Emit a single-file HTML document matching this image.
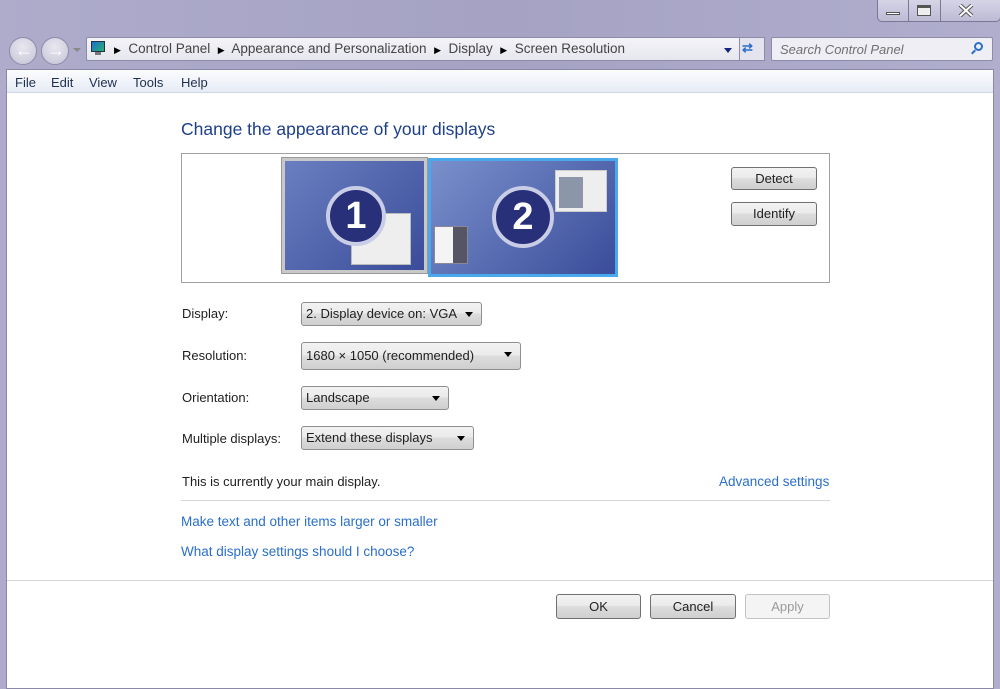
<!DOCTYPE html>
<html><head><style>
*{margin:0;padding:0;box-sizing:border-box}
body{width:1000px;height:681px;overflow:hidden;background:linear-gradient(90deg,#aeabcb,#a5a2c4 50%,#b0adcd);font-family:"Liberation Sans",sans-serif;font-size:13px;color:#1e1e1e;position:relative}
.a{position:absolute}
.btn{position:absolute;border:1px solid #707070;border-radius:3px;background:linear-gradient(#f2f2f2,#ebebeb 45%,#dddddd 50%,#cfcfcf);text-align:center;font-size:13px;color:#222}
.dd{position:absolute;border:1px solid #8e8f8f;border-radius:3px;background:linear-gradient(#f2f2f2,#ebebeb 45%,#dddddd 50%,#cfcfcf);font-size:13px;padding-left:4px;line-height:22px;color:#1e1e1e}
.dd:after{content:"";position:absolute;right:8px;top:9px;border-left:4px solid transparent;border-right:4px solid transparent;border-top:5px solid #000}
.lbl{position:absolute;left:182px;font-size:13px}
.lnk{position:absolute;color:#2a6fc9;font-size:13px}
</style></head><body>
<div class="a" style="left:877px;top:0;width:124px;height:22px;border:1px solid #7a7894;border-top:none;border-radius:0 0 5px 5px;background:linear-gradient(#d6d4e6,#bdbbd5)"></div>
<div class="a" style="left:908px;top:0;width:1px;height:21px;background:#7a7894"></div>
<div class="a" style="left:940px;top:0;width:1px;height:21px;background:#7a7894"></div>
<div class="a" style="left:886px;top:12px;width:14px;height:3px;background:#fff;border:1px solid #555"></div>
<div class="a" style="left:917px;top:5px;width:14px;height:11px;border:1px solid #555;border-top-width:3px;background:#eee"></div>
<svg class="a" style="left:958px;top:4px" width="16" height="13"><path d="M2 1L14 12M14 1L2 12" stroke="#555" stroke-width="4"/><path d="M2 1L14 12M14 1L2 12" stroke="#fff" stroke-width="2"/></svg>
<div class="a" style="left:9px;top:37px;width:28px;height:28px;border-radius:50%;border:1px solid #8d8ba7;background:radial-gradient(circle at 50% 35%,#e8e7f0,#c5c3d6)"></div>
<div class="a" style="left:41px;top:37px;width:28px;height:28px;border-radius:50%;border:1px solid #8d8ba7;background:radial-gradient(circle at 50% 35%,#e8e7f0,#c5c3d6)"></div>
<div class="a" style="left:15px;top:40px;color:#fff;font-size:18px;font-weight:bold">&#8592;</div>
<div class="a" style="left:47px;top:40px;color:#fff;font-size:18px;font-weight:bold">&#8594;</div>
<div class="a" style="left:73px;top:48px;border-left:4px solid transparent;border-right:4px solid transparent;border-top:4px solid #888"></div>
<div class="a" style="left:86px;top:37px;width:679px;height:24px;border:1px solid #8d8ba7;background:linear-gradient(#f4f4f8,#e6e6ee);border-radius:2px"></div>
<div class="a" style="left:739px;top:37px;width:26px;height:24px;border:1px solid #8d8ba7;background:#e4e4ee"></div>
<div class="a" style="left:742px;top:40px;color:#2a6fc9;font-size:13px;font-weight:bold">&#8644;</div>
<div class="a" style="left:91px;top:41px;width:14px;height:11px;background:linear-gradient(135deg,#1b6fd1,#2ab06d);border:1px solid #234"></div>
<div class="a" style="left:95px;top:52px;width:6px;height:3px;background:#777"></div>
<div class="a" style="left:114px;top:41px;font-size:13.5px;color:#444;white-space:nowrap">
<span style="font-size:9px;color:#000">&#9654;</span>&nbsp; Control Panel &nbsp;<span style="font-size:9px;color:#000">&#9654;</span>&nbsp; Appearance and Personalization &nbsp;<span style="font-size:9px;color:#000">&#9654;</span>&nbsp; Display &nbsp;<span style="font-size:9px;color:#000">&#9654;</span>&nbsp; Screen Resolution</div>
<div class="a" style="left:724px;top:48px;border-left:4px solid transparent;border-right:4px solid transparent;border-top:5px solid #1a237e"></div>
<div class="a" style="left:771px;top:37px;width:222px;height:24px;border:1px solid #8d8ba7;background:#eeeef4;border-radius:2px"></div>
<div class="a" style="left:780px;top:42px;font-style:italic;color:#707070;font-size:13px">Search Control Panel</div>
<div class="a" style="left:974px;top:42px;width:9px;height:9px;border:2px solid #2a6fc9;border-radius:50%"></div>
<div class="a" style="left:971px;top:51px;width:5px;height:2px;background:#2a6fc9;transform:rotate(-45deg)"></div>
<div class="a" style="left:6px;top:69px;width:988px;height:620px;background:#fff;border:1px solid #8a88a6"></div>
<div class="a" style="left:7px;top:70px;width:986px;height:23px;background:linear-gradient(#fbfcfe,#e6ebf5);border-bottom:1px solid #cfd6e4"></div>
<div class="a" style="left:15px;top:75px;color:#1e3050">File</div>
<div class="a" style="left:51px;top:75px;color:#1e3050">Edit</div>
<div class="a" style="left:89px;top:75px;color:#1e3050">View</div>
<div class="a" style="left:133px;top:75px;color:#1e3050">Tools</div>
<div class="a" style="left:181px;top:75px;color:#1e3050">Help</div>
<div class="a" style="left:181px;top:119px;font-size:17.5px;color:#1e3f8a">Change the appearance of your displays</div>
<div class="a" style="left:181px;top:153px;width:649px;height:130px;border:1px solid #a0a0a0"></div>
<div class="a" style="left:282px;top:158px;width:145px;height:115px;border:3px solid #c8c8c8;background:linear-gradient(135deg,#6a7fc0,#3a4c9a);box-shadow:0 0 0 1px #999"></div>
<div class="a" style="left:351px;top:213px;width:60px;height:52px;background:#eee;border:1px solid #bbb"></div>
<div class="a" style="left:326px;top:186px;width:60px;height:60px;border-radius:50%;border:4px solid #c9cde6;background:#28307a;color:#fff;font-size:38px;font-weight:bold;text-align:center;line-height:52px">1</div>
<div class="a" style="left:428px;top:158px;width:190px;height:119px;border:3px solid #4aa9ea;background:linear-gradient(135deg,#7a90cc,#3a4c9a)"></div>
<div class="a" style="left:555px;top:170px;width:52px;height:42px;background:#eee;border:1px solid #ccc"></div>
<div class="a" style="left:559px;top:177px;width:24px;height:31px;background:#8b97a8"></div>
<div class="a" style="left:434px;top:226px;width:34px;height:38px;background:#556;border:1px solid #889"></div>
<div class="a" style="left:435px;top:227px;width:18px;height:36px;background:#f4f4f4"></div>
<div class="a" style="left:492px;top:186px;width:62px;height:62px;border-radius:50%;border:4px solid #c9cde6;background:#28307a;color:#fff;font-size:38px;font-weight:bold;text-align:center;line-height:54px">2</div>
<div class="btn" style="left:731px;top:167px;width:86px;height:23px;line-height:21px">Detect</div>
<div class="btn" style="left:731px;top:202px;width:86px;height:24px;line-height:22px">Identify</div>
<div class="lbl" style="top:306px">Display:</div>
<div class="dd" style="left:301px;top:302px;width:181px;height:24px">2. Display device on: VGA</div>
<div class="lbl" style="top:348px">Resolution:</div>
<div class="dd" style="left:301px;top:342px;width:220px;height:28px;line-height:26px">1680 × 1050 (recommended)</div>
<div class="lbl" style="top:390px">Orientation:</div>
<div class="dd" style="left:301px;top:386px;width:148px;height:24px">Landscape</div>
<div class="lbl" style="top:431px">Multiple displays:</div>
<div class="dd" style="left:301px;top:426px;width:173px;height:24px">Extend these displays</div>
<div class="lbl" style="top:474px">This is currently your main display.</div>
<div class="lnk" style="left:719px;top:474px;font-size:13.5px">Advanced settings</div>
<div class="a" style="left:181px;top:500px;width:649px;height:1px;background:#d6d6d6"></div>
<div class="lnk" style="left:181px;top:514px;font-size:13.5px">Make text and other items larger or smaller</div>
<div class="lnk" style="left:181px;top:544px;font-size:13.5px">What display settings should I choose?</div>
<div class="a" style="left:7px;top:580px;width:986px;height:1px;background:#d6d6d6"></div>
<div class="btn" style="left:556px;top:594px;width:85px;height:25px;line-height:23px">OK</div>
<div class="btn" style="left:650px;top:594px;width:86px;height:25px;line-height:23px">Cancel</div>
<div class="btn" style="left:745px;top:594px;width:85px;height:25px;line-height:23px;background:#f4f4f4;border-color:#c2c2c2;color:#9a9a9a">Apply</div>
</body></html>
